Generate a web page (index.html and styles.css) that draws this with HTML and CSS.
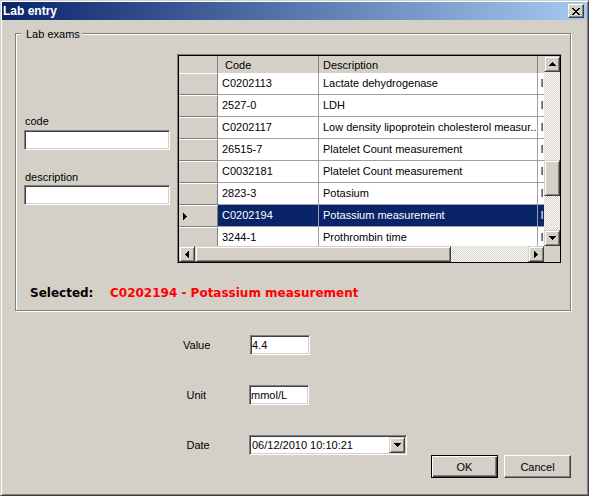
FILE: index.html
```html
<!DOCTYPE html>
<html>
<head>
<meta charset="utf-8">
<title>Lab entry</title>
<link rel="stylesheet" href="styles.css">
</head>
<body>
<div class="window">
  <div class="titlebar">
    <span class="title">Lab entry</span>
    <div class="close">
      <svg width="8" height="7" viewBox="0 0 8 7" shape-rendering="crispEdges"><path fill="#000" d="M0 0h2v1H0zM6 0h2v1H6zM1 1h2v1H1zM5 1h2v1H5zM2 2h4v1H2zM3 3h2v1H3zM2 4h4v1H2zM1 5h2v1H1zM5 5h2v1H5zM0 6h2v1H0zM6 6h2v1H6z"/></svg>
    </div>
  </div>
  <div class="body">
    <div class="group">
      <span class="legend">Lab exams</span>
      <div class="group-main">
        <div class="search">
          <label class="lbl-code">code</label>
          <div class="textbox"></div>
          <label class="lbl-desc">description</label>
          <div class="textbox"></div>
        </div>
        <div class="datagrid">
          <div class="dg-inner">
            <div class="dg-top">
              <div class="dg-table">
                <div class="dg-row dg-head">
                  <div class="hc"></div>
                  <div class="hc hc-code">Code</div>
                  <div class="hc">Description</div>
                  <div class="hc hc-last"></div>
                </div>
                <div class="dg-row"><div class="rh"></div><div class="cell">C0202113</div><div class="cell">Lactate dehydrogenase</div><div class="cell cell-last">I</div></div>
                <div class="dg-row"><div class="rh"></div><div class="cell">2527-0</div><div class="cell">LDH</div><div class="cell cell-last">I</div></div>
                <div class="dg-row"><div class="rh"></div><div class="cell">C0202117</div><div class="cell">Low density lipoprotein cholesterol measur...</div><div class="cell cell-last">I</div></div>
                <div class="dg-row"><div class="rh"></div><div class="cell">26515-7</div><div class="cell">Platelet Count measurement</div><div class="cell cell-last">I</div></div>
                <div class="dg-row"><div class="rh"></div><div class="cell">C0032181</div><div class="cell">Platelet Count measurement</div><div class="cell cell-last">I</div></div>
                <div class="dg-row"><div class="rh"></div><div class="cell">2823-3</div><div class="cell">Potasium</div><div class="cell cell-last">I</div></div>
                <div class="dg-row sel"><div class="rh"><svg width="4" height="7" viewBox="0 0 4 7" shape-rendering="crispEdges"><path fill="#000" d="M0 0h1v7H0zM1 1h1v5H1zM2 2h1v3H2zM3 3h1v1H3z"/></svg></div><div class="cell">C0202194</div><div class="cell">Potassium measurement</div><div class="cell cell-last">I</div></div>
                <div class="dg-row"><div class="rh"></div><div class="cell">3244-1</div><div class="cell">Prothrombin time</div><div class="cell cell-last">I</div></div>
              </div>
              <div class="vscroll">
                <div class="sb-btn"><svg width="7" height="4" viewBox="0 0 7 4" shape-rendering="crispEdges"><path fill="#000" d="M3 0h1v1H3zM2 1h3v1H2zM1 2h5v1H1zM0 3h7v1H0z"/></svg></div>
                <div class="track vtrack-a"></div>
                <div class="raised vthumb"></div>
                <div class="track vtrack-b"></div>
                <div class="sb-btn"><svg width="7" height="4" viewBox="0 0 7 4" shape-rendering="crispEdges"><path fill="#000" d="M0 0h7v1H0zM1 1h5v1H1zM2 2h3v1H2zM3 3h1v1H3z"/></svg></div>
              </div>
            </div>
            <div class="hscroll">
              <div class="hbar">
                <div class="sb-btn"><svg width="4" height="7" viewBox="0 0 4 7" shape-rendering="crispEdges"><path fill="#000" d="M3 0h1v7H3zM2 1h1v5H2zM1 2h1v3H1zM0 3h1v1H0z"/></svg></div>
                <div class="raised hthumb"></div>
                <div class="track htrack"></div>
                <div class="sb-btn"><svg width="4" height="7" viewBox="0 0 4 7" shape-rendering="crispEdges"><path fill="#000" d="M0 0h1v7H0zM1 1h1v5H1zM2 2h1v3H2zM3 3h1v1H3z"/></svg></div>
              </div>
              <div class="corner"></div>
            </div>
          </div>
        </div>
      </div>
      <div class="selected">
        <span class="sel-label">Selected:</span>
        <span class="sel-value">C0202194 - Potassium measurement</span>
      </div>
    </div>
    <div class="lower">
      <div class="fields">
        <div class="field field-value"><label>Value</label><div class="textbox tb-small">4.4</div></div>
        <div class="field field-unit"><label>Unit</label><div class="textbox tb-small">mmol/L</div></div>
        <div class="field field-date"><label>Date</label>
          <div class="textbox datebox">
            <span class="date-text">06/12/2010 10:10:21</span>
            <div class="sb-btn dd-btn"><svg width="7" height="4" viewBox="0 0 7 4" shape-rendering="crispEdges"><path fill="#000" d="M0 0h7v1H0zM1 1h5v1H1zM2 2h3v1H2zM3 3h1v1H3z"/></svg></div>
          </div>
        </div>
      </div>
      <div class="buttons">
        <div class="btn btn-default">OK</div>
        <div class="btn">Cancel</div>
      </div>
    </div>
  </div>
</div>
</body>
</html>
```
FILE: styles.css
```css
* { box-sizing: border-box; }
html, body { margin: 0; padding: 0; }
body {
  width: 589px;
  height: 496px;
  overflow: hidden;
  background: #d4d0c8;
  font-family: "Liberation Sans", Arial, sans-serif;
  font-size: 11px;
  color: #000;
}
.window {
  width: 589px;
  height: 496px;
  background: #d4d0c8;
  border: 1px solid;
  border-color: #d4d0c8 #404040 #404040 #d4d0c8;
  box-shadow: inset 1px 1px 0 #fff, inset -1px -1px 0 #808080;
  padding: 1px;
  display: flex;
  flex-direction: column;
}
.titlebar {
  flex: none;
  height: 18px;
  display: flex;
  align-items: center;
  padding: 0 3px 0 1px;
  background: linear-gradient(to right, #0a246a, #a6caf0);
}
.title {
  flex: 1;
  color: #fff;
  font-weight: bold;
  font-size: 12px;
  line-height: 18px;
}
.close {
  width: 16px;
  height: 14px;
  display: flex;
  align-items: center;
  justify-content: center;
  background: #d4d0c8;
  border: 1px solid;
  border-color: #fff #404040 #404040 #fff;
  box-shadow: inset -1px -1px 0 #808080;
}
.body {
  flex: 1;
  display: flex;
  flex-direction: column;
}
.group {
  position: relative;
  flex: none;
  margin: 13px 0 0 13px;
  width: 556px;
  height: 278px;
  border: 1px solid #808080;
  box-shadow: inset 1px 1px 0 #fff, 1px 1px 0 #fff;
  padding: 20px 7px 0 8px;
}
.legend {
  position: absolute;
  top: -6px;
  left: 5px;
  padding: 0 2px 0 5px;
  line-height: 13px;
  background: #d4d0c8;
}
.group-main {
  display: flex;
  gap: 7px;
}
.search {
  width: 146px;
  padding-top: 61px;
  display: flex;
  flex-direction: column;
}
.search label {
  line-height: 13px;
  padding-left: 1px;
}
.lbl-code { margin-bottom: 2px; }
.lbl-desc { margin-top: 21px; margin-bottom: 1px; }
.textbox {
  height: 20px;
  background: #fff;
  border: 1px solid;
  border-color: #808080 #fff #fff #808080;
  box-shadow: inset 1px 1px 0 #404040, inset -1px -1px 0 #d4d0c8;
  padding-left: 2px;
  line-height: 18px;
  white-space: nowrap;
}
.datagrid {
  width: 385px;
  height: 210px;
  border: 1px solid;
  border-color: #808080 #d4d0c8 #d4d0c8 #808080;
}
.dg-inner {
  height: 100%;
  border: 1px solid #000;
  display: flex;
  flex-direction: column;
}
.dg-top {
  display: flex;
  height: 190px;
}
.dg-table {
  width: 365px;
  overflow: hidden;
  background: #808080;
}
.dg-row {
  display: grid;
  grid-template-columns: 39px 101px 219px 6px;
  height: 22px;
}
.dg-head {
  height: 17px;
  background: #d4d0c8;
}
.hc {
  border-right: 1px solid #808080;
  line-height: 18px;
  height: 17px;
  padding-left: 4px;
  white-space: nowrap;
  overflow: hidden;
}
.hc-code { padding-left: 7px; }
.hc-last { border-right: none; }
.rh {
  background: #d4d0c8;
  border-top: 1px solid #fff;
  border-bottom: 1px solid #808080;
  border-right: 1px solid #808080;
  display: flex;
  align-items: center;
  padding-left: 4px;
}
.cell {
  background: #fff;
  border-right: 1px solid #a0a0a0;
  border-bottom: 1px solid #a0a0a0;
  padding-left: 4px;
  line-height: 21px;
  white-space: nowrap;
  overflow: hidden;
}
.cell-last {
  border-right: none;
  padding-left: 2.5px;
}
.sel .cell {
  background: #0a246a;
  color: #fff;
}
.vscroll {
  width: 16px;
  display: flex;
  flex-direction: column;
}
.sb-btn, .raised {
  flex: none;
  background: #d4d0c8;
  border: 1px solid;
  border-color: #d4d0c8 #404040 #404040 #d4d0c8;
  box-shadow: inset 1px 1px 0 #fff, inset -1px -1px 0 #808080;
}
.sb-btn {
  width: 16px;
  height: 16px;
  display: flex;
  align-items: center;
  justify-content: center;
}
.track {
  background-color: #fff;
  background-image: repeating-conic-gradient(#d4d0c8 0 25%, #fff 0 50%);
  background-size: 2px 2px;
}
.vtrack-a { height: 88px; flex: none; }
.vthumb { height: 36px; }
.vtrack-b { flex: 1; }
.hscroll {
  display: flex;
  height: 16px;
}
.hbar {
  width: 365px;
  display: flex;
}
.hthumb { width: 256px; }
.htrack { flex: 1; }
.corner {
  flex: 1;
  background: #d4d0c8;
}
.selected {
  display: flex;
  margin: 22px 0 0 6px;
  font-family: "DejaVu Sans", sans-serif;
  font-weight: bold;
  font-size: 12px;
  line-height: 14px;
}
.sel-label { width: 80px; }
.sel-value { color: #ff0000; }
.lower {
  flex: 1;
  display: flex;
  justify-content: space-between;
  padding: 24px 16px 16px 181px;
}
.fields {
  display: flex;
  flex-direction: column;
  gap: 30px;
}
.field {
  display: flex;
  align-items: center;
  height: 20px;
}
.field label { width: 66px; }
.field-value label { width: 67px; }
.field-unit label, .field-date label { padding-left: 3.5px; }
.tb-small {
  width: 60px;
  padding-left: 1px;
}
.datebox {
  width: 158px;
  display: flex;
  align-items: center;
  padding: 1px;
}
.date-text {
  flex: 1;
  padding-left: 1px;
}
.buttons {
  align-self: flex-end;
  display: flex;
  gap: 6px;
}
.btn {
  width: 67px;
  height: 23px;
  display: flex;
  align-items: center;
  justify-content: center;
  background: #d4d0c8;
  border: 1px solid;
  border-color: #fff #404040 #404040 #fff;
  box-shadow: inset -1px -1px 0 #808080;
}
.btn-default {
  border: 1px solid #000;
  box-shadow: inset 1px 1px 0 #fff, inset -1px -1px 0 #404040, inset -2px -2px 0 #808080;
}
```
